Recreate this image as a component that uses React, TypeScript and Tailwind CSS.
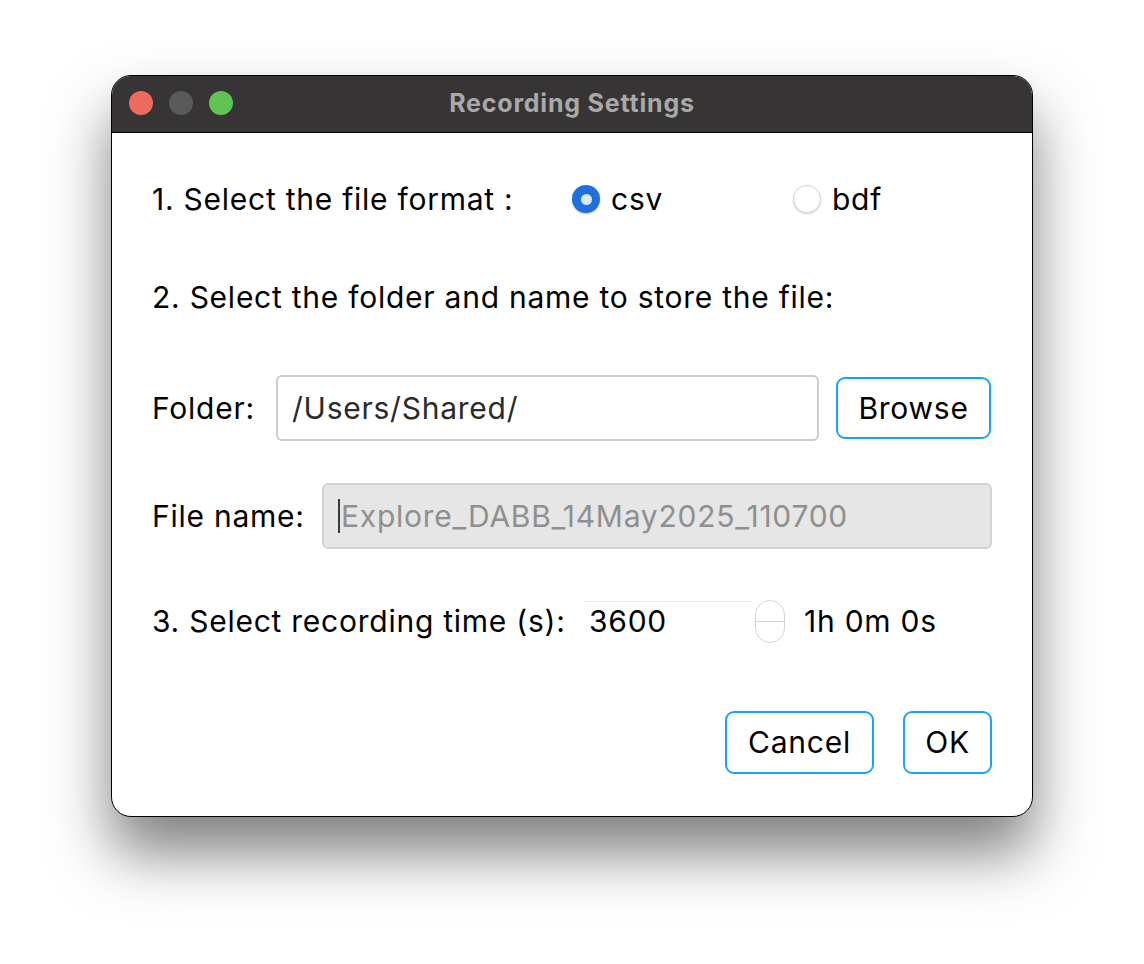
import { useState } from "react";

function Radio({ checked }: { checked: boolean }) {
    return checked ? (
        <span className="flex h-[28px] w-[28px] items-center justify-center rounded-full bg-[#1f6fdd] shadow-[0_1px_2px_rgba(0,0,0,0.25)]">
            <span className="h-[11px] w-[11px] rounded-full bg-[#dde7f8]" />
        </span>
    ) : (
        <span className="h-[28px] w-[28px] rounded-full border border-[#d6d6d6] bg-white shadow-[0_1px_2px_rgba(0,0,0,0.18)]" />
    );
}

export default function App() {
    const [format, setFormat] = useState("csv");

    return (
        <div className="min-h-screen w-full bg-white pl-[111px] pt-[75px] font-['Inter',sans-serif] text-[30px] tracking-[0.75px] text-black">
            <div className="flex h-[742px] w-[922px] flex-col overflow-hidden rounded-[20px] border border-black bg-white shadow-[0_36px_60px_rgba(0,0,0,0.5)]">
                {/* title bar */}
                <div className="relative flex h-[57px] shrink-0 items-center justify-center border-b border-black bg-[#363435]">
                    <div className="absolute left-[17px] top-[15px] flex gap-[16px]">
                        <span className="h-[24px] w-[24px] rounded-full bg-[#ee6a5f]" />
                        <span className="h-[24px] w-[24px] rounded-full bg-[#5b5a5b]" />
                        <span className="h-[24px] w-[24px] rounded-full bg-[#5fc454]" />
                    </div>
                    <span className="text-[25px] font-bold tracking-[0.8px] text-[#a9a9a9]">Recording Settings</span>
                </div>

                <div className="flex flex-col px-[40px]">
                    {/* 1 */}
                    <div className="mt-[46px] flex h-[40px] items-center">
                        <span className="w-[420px]">1. Select the file format :</span>
                        <button onClick={() => setFormat("csv")} className="flex w-[221px] items-center gap-[11px]">
                            <Radio checked={format === "csv"} />
                            <span>csv</span>
                        </button>
                        <button onClick={() => setFormat("bdf")} className="flex items-center gap-[11px]">
                            <Radio checked={format === "bdf"} />
                            <span>bdf</span>
                        </button>
                    </div>

                    {/* 2 */}
                    <div className="mt-[58px] flex h-[40px] items-center">
                        2. Select the folder and name to store the file:
                    </div>

                    <div className="mt-[58px] flex h-[66px] items-center">
                        <span className="w-[124px]">Folder:</span>
                        <div className="flex h-[66px] w-[543px] items-center rounded-[6px] border-2 border-[#cdcdcd] px-[14px] text-[#2a2a2a]">
                            /Users/Shared/
                        </div>
                        <button className="ml-[17px] h-[62px] w-[155px] rounded-[9px] border-2 border-[#1aa3f6] bg-white">
                            Browse
                        </button>
                    </div>

                    <div className="mt-[42px] flex h-[66px] items-center">
                        <span className="w-[170px]">File name:</span>
                        <div className="flex h-[66px] flex-1 items-center rounded-[6px] border-2 border-[#d2d2d2] bg-[#e6e6e6] px-[14px] text-[#8f8f8f]">
                            <span className="mr-[1px] h-[34px] w-[2px] bg-[#3a3a3a]" />
                            Explore_DABB_14May2025_110700
                        </div>
                    </div>

                    {/* 3 */}
                    <div className="mt-[50px] flex h-[44px] items-center">
                        <span className="w-[433px]">3. Select recording time (s):</span>
                        <div className="flex h-[40px] w-[166px] items-center border-t border-[#ececec] bg-white pl-[4px]">
                            3600
                        </div>
                        <div className="ml-[4px] flex h-[43px] w-[30px] flex-col overflow-hidden rounded-full border border-[#d4d4d4] bg-white">
                            <span className="flex-1 border-b border-[#d4d4d4]" />
                            <span className="flex-1" />
                        </div>
                        <span className="ml-[19px]">1h 0m 0s</span>
                    </div>

                    {/* buttons */}
                    <div className="mt-[68px] flex justify-end gap-[29px]">
                        <button className="h-[63px] w-[149px] rounded-[9px] border-2 border-[#1aa3f6] bg-white">Cancel</button>
                        <button className="h-[63px] w-[89px] rounded-[9px] border-2 border-[#1aa3f6] bg-white">OK</button>
                    </div>
                </div>
            </div>
        </div>
    );
}
